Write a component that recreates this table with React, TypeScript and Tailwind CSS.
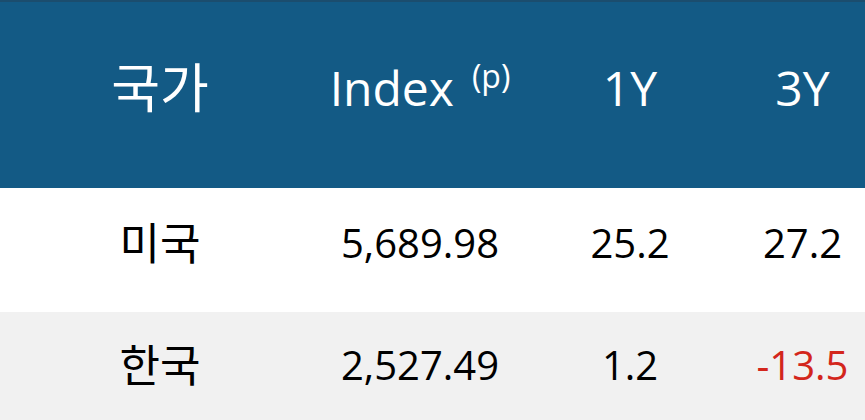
const rows = [
  { country: "미국", index: "5,689.98", y1: "25.2", y3: "27.2" },
  { country: "한국", index: "2,527.49", y1: "1.2", y3: "-13.5" },
];

const font = { fontFamily: '"Open Sans", "Noto Sans CJK KR", sans-serif' };

export default function App() {
  return (
    <div className="w-[865px] h-[420px] overflow-hidden bg-white" style={font}>
      <div className="grid grid-cols-[320px_200px_220px_1fr] items-center h-[188px] bg-[#135a85] border-t-2 border-[#1b4d6e] text-white text-[48px] pb-[14px]">
        <div className="text-center text-[53px]">국가</div>
        <div className="text-center whitespace-nowrap">
          Index<sup className="text-[32px] ml-[18px] -top-[18px]">(p)</sup>
        </div>
        <div className="text-center">1Y</div>
        <div className="text-center">3Y</div>
      </div>
      {rows.map((r, i) => (
        <div
          key={r.country}
          className={`grid grid-cols-[320px_200px_220px_1fr] items-center text-[40px] text-black ${
            i === 0 ? "h-[124px] bg-white pb-[14px]" : "h-[108px] bg-[#f1f1f1] pb-[2px]"
          }`}
        >
          <div className="text-center text-[44px]">{r.country}</div>
          <div className="text-center">{r.index}</div>
          <div className="text-center">{r.y1}</div>
          <div className={`text-center ${r.y3.startsWith("-") ? "text-[#d3261c]" : ""}`}>{r.y3}</div>
        </div>
      ))}
    </div>
  );
}
